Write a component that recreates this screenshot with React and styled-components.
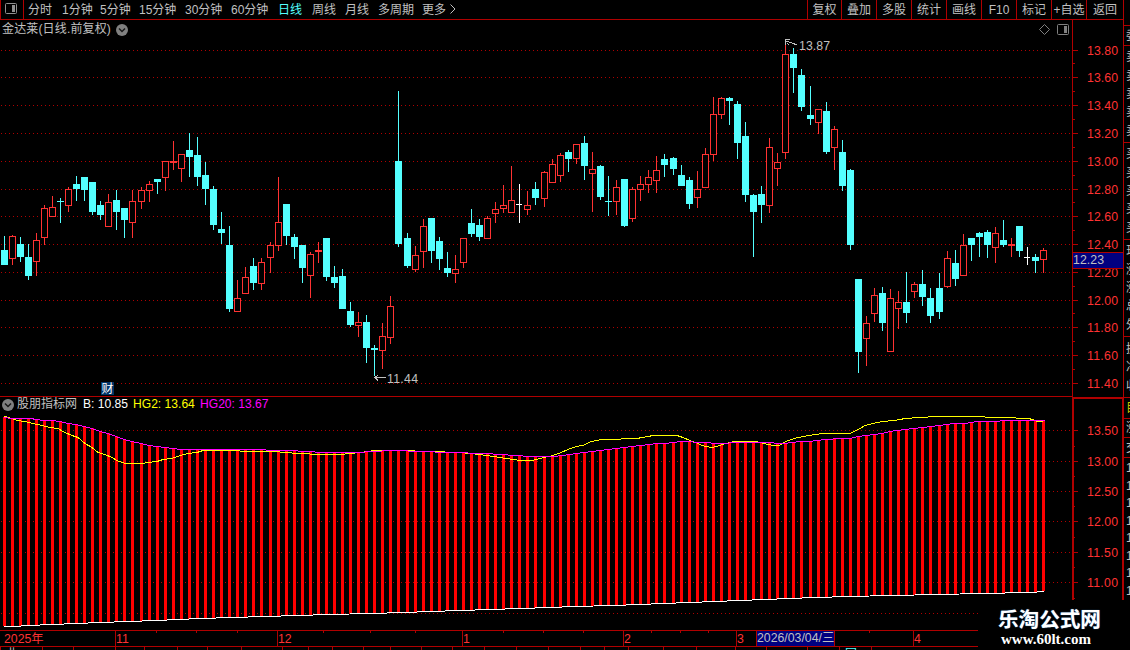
import React from "react";
import styled, { createGlobalStyle } from "styled-components";

const LINE = "#b00000";
const UP = "#ff3232";
const DOWN = "#54ffff";
const GREY = "#c0c0c0";
const FONT = '"Liberation Sans", "Noto Sans CJK SC", sans-serif';

const GlobalStyle = createGlobalStyle`
  * { box-sizing: border-box; }
  body { margin: 0; background: #000; overflow: hidden; font-family: ${FONT}; }
  svg { display: block; }
`;

const Screen = styled.div`
  position: relative;
  display: flex;
  width: 1130px;
  height: 650px;
  overflow: hidden;
  background: #000;
  color: ${GREY};
  font-size: 12px;
`;

const Main = styled.main`
  display: flex;
  flex-direction: column;
  width: 1123px;
  flex: none;
`;

const Toolbar = styled.header`
  display: flex;
  height: 20px;
  border-bottom: 1px solid ${LINE};
`;

const IconCell = styled.div`
  width: 24px;
  padding: 2px 0 0 3px;
  border: solid ${LINE};
  border-width: 0 1px;
`;

const Periods = styled.nav`
  display: flex;
  width: 783px;
  padding-left: 4px;
`;

const Period = styled.span`
  width: ${(p) => p.$w}px;
  line-height: 20px;
  white-space: nowrap;
  color: ${(p) => (p.$active ? DOWN : GREY)};
`;

const Action = styled.span`
  width: ${(p) => p.$w}px;
  line-height: 20px;
  text-align: center;
  white-space: nowrap;
  border-left: 1px solid ${LINE};
`;

const Panel = styled.section`
  display: flex;
  height: ${(p) => p.$h}px;
`;

const Plot = styled.div`
  display: flex;
  flex-direction: column;
  width: 1072px;
  border-bottom: ${(p) => (p.$ruled ? `1px solid ${LINE}` : "none")};
`;

const PanelHeader = styled.div`
  display: flex;
  align-items: center;
  height: ${(p) => p.$h}px;
  padding: 0 3px ${(p) => p.$lift || 0}px 2px;
  line-height: 15px;
  white-space: nowrap;
`;

const Title = styled.span`
  width: ${(p) => p.$w}px;
  padding-left: ${(p) => p.$indent || 0}px;
  letter-spacing: ${(p) => p.$spacing || 0}px;
  color: ${GREY};
`;

const Reading = styled.span`
  width: ${(p) => p.$w}px;
  font-size: 12.1px;
  color: ${(p) => p.$color};
`;

const HeaderTools = styled.div`
  display: flex;
  gap: 6px;
  align-items: center;
  margin-left: auto;
`;

const TimeAxis = styled.footer`
  position: relative;
  display: flex;
  width: 978px;
  height: 17px;
  border: solid ${LINE};
  border-width: 1px 0;
`;

const Month = styled.div`
  width: ${(p) => p.$w}px;
  padding-left: ${(p) => (p.$first ? 4 : 0)}px;
  border-left: ${(p) => (p.$first ? "none" : `1px solid ${LINE}`)};
  background: ${(p) => (p.$marked ? "#000080" : "transparent")};
  color: ${(p) => (p.$marked ? GREY : UP)};
  font-size: 12.3px;
  line-height: ${(p) => (p.$marked ? 15 : 16)}px;
  white-space: nowrap;
`;

const WeekTick = styled.i`
  position: absolute;
  top: 0;
  left: ${(p) => p.$x}px;
  width: 1px;
  height: 2px;
  background: ${LINE};
`;

const StatusStrip = styled.div`
  display: flex;
  width: 978px;
  height: 3px;
  overflow: hidden;
`;

const StatusCell = styled.div`
  flex: none;
  width: ${(p) => p.$w}px;
  height: 3px;
  border-left: 1px solid ${LINE};
  padding-left: 5px;
  line-height: 14px;
  color: ${(p) => p.$color || GREY};
  overflow: hidden;
  white-space: nowrap;
`;

const Quotes = styled.aside`
  display: flex;
  flex-direction: column;
  width: 7px;
  height: 600px;
  overflow: hidden;
  border-left: 1px solid ${LINE};
`;

const QuoteGroup = styled.div`
  display: flex;
  flex-direction: column;
  flex: none;
  justify-content: space-evenly;
  height: ${(p) => p.$h}px;
  padding-left: 2px;
  border-bottom: ${(p) => (p.$open ? "none" : `1px solid ${LINE}`)};
  color: ${(p) => p.$color || GREY};
  line-height: 14px;
  white-space: nowrap;
  overflow: hidden;
`;

const Watermark = styled.div`
  position: absolute;
  left: 978px;
  top: 600px;
  width: 152px;
  height: 50px;
  padding: 6px 0 0 20px;
  background: #000;
  color: #fff;
  white-space: nowrap;
`;

const SiteName = styled.div`
  font: bold 20.6px/25px "Noto Sans CJK SC", sans-serif;
  text-shadow: 0 0 1px #3d8ad8;
`;

const SiteUrl = styled.div`
  padding-left: 3px;
  font: bold 15px/16px "Liberation Serif", serif;
`;

const periods = [
  ["分时", 34], ["1分钟", 38], ["5分钟", 39], ["15分钟", 46], ["30分钟", 46], ["60分钟", 47],
  ["日线", 34], ["周线", 33], ["月线", 33], ["多周期", 44], ["更多", 27],
];
const actions = [
  ["复权", 34], ["叠加", 35], ["多股", 35], ["统计", 35], ["画线", 35],
  ["F10", 35], ["标记", 35], ["+自选", 35], ["返回", 37],
];

// high, body top, body bottom, low, kind (u = up, d = down, w = flat)
const candles = `236 250 265 265 d|235 236 259 265 u|237 244 257 262 d|244 257 276 280 d|233 240 262 276 u|205 208 238 245 u|196 207 217 217 u|198 201 202 223 d|187 189 206 212 u|176 184 189 201 d|177 177 190 201 d|182 182 212 215 d|201 205 215 220 d|194 202 227 227 u|190 200 212 230 d|208 208 220 238 d|190 201 223 238 u|187 190 202 209 u|181 184 191 202 u|179 179 182 194 d|161 161 178 191 u|141 161 163 170 u|154 154 169 182 u|133 150 157 177 d|137 155 177 186 d|162 175 189 205 d|186 189 225 230 d|212 229 233 244 d|226 245 309 312 d|280 298 312 312 u|267 277 294 294 u|258 266 283 290 d|258 262 284 290 u|242 245 258 273 u|177 222 246 251 u|204 204 236 245 d|234 237 247 259 d|245 245 268 283 d|252 254 276 298 u|242 250 252 263 u|238 238 277 281 d|266 277 283 288 d|269 276 309 309 d|302 311 325 327 d|312 322 326 337 u|315 322 348 363 d|345 348 350 376 d|323 336 351 369 u|296 306 338 344 u|91 161 244 247 d|233 238 266 268 d|246 255 270 272 u|219 226 252 268 u|218 218 251 263 d|237 241 259 270 d|252 268 273 277 d|255 269 274 283 u|238 238 263 268 u|209 223 234 237 d|219 225 237 241 d|216 218 239 239 u|202 209 214 223 u|185 205 209 213 u|166 200 213 213 u|184 204 205 223 w|191 205 210 215 u|182 189 198 205 d|171 172 199 207 u|159 164 183 183 u|153 155 176 182 u|150 152 159 172 d|144 144 159 164 u|136 143 166 180 d|152 169 174 212 u|165 166 197 200 d|176 201 202 216 d|180 187 202 215 u|179 179 226 227 d|187 189 219 222 u|176 184 190 201 u|170 177 185 193 u|156 170 181 193 u|154 159 165 177 d|157 158 169 175 d|165 175 186 186 d|177 180 204 209 d|171 189 198 208 u|148 154 188 188 u|97 114 155 161 u|97 98 115 119 u|97 98 101 125 d|101 104 143 159 d|122 136 195 202 d|194 195 212 257 d|186 194 205 223 d|138 147 206 213 u|153 162 169 186 u|43 54 153 159 u|48 54 68 93 d|69 75 107 111 d|86 115 119 125 d|109 109 123 134 u|102 111 152 154 d|126 129 148 170 u|140 152 186 191 d|169 170 245 250 d|279 279 352 373 d|316 323 339 366 u|288 295 314 322 u|287 293 323 331 d|289 298 352 352 u|291 302 309 329 u|272 302 313 323 d|282 284 292 298 u|270 284 297 306 d|288 298 316 323 d|273 288 312 319 d|251 258 287 288 u|250 263 279 286 d|234 245 276 276 u|238 238 245 261 d|232 233 237 257 d|230 232 245 258 d|227 233 248 263 u|220 240 245 247 d|238 244 246 257 u|226 226 251 257 d|247 257 258 265 w|254 257 261 273 d|248 250 260 273 u`
  .split("|")
  .map((row, i) => {
    const [hi, top, bottom, low, kind] = row.split(" ");
    return { x: 4 + 8 * i + Math.floor(i * 0.0602 + 0.02), hi: +hi, top: +top, bottom: +bottom, low: +low, kind };
  });

const slow = [[4,417],[12,418],[31,418],[36,419],[44,420],[52,420],[60,421],[68,423],[76,424],[84,426],[92,428],[100,431],[108,433],[116,436],[124,439],[132,441],[141,443],[149,445],[157,446],[165,447],[173,448],[181,449],[265,449],[267,450],[296,450],[300,451],[330,452],[360,452],[370,451],[395,450],[420,451],[450,452],[485,453],[500,454],[515,455],[530,456],[553,456],[563,455],[576,453],[584,452],[592,451],[600,450],[608,449],[616,448],[625,447],[632,446],[641,445],[649,444],[657,443],[665,443],[673,442],[681,441],[690,441],[696,442],[709,442],[713,443],[726,443],[732,442],[771,442],[777,443],[785,443],[792,442],[801,441],[809,441],[817,440],[826,439],[841,438],[850,438],[858,436],[866,435],[875,434],[882,433],[890,431],[897,430],[905,429],[914,428],[923,427],[931,426],[939,425],[947,424],[954,423],[965,423],[971,422],[978,421],[997,421],[1003,420],[1045,420]];
const fast = [[4,416],[9,417],[17,420],[25,421],[33,423],[42,425],[50,427],[58,428],[65,432],[72,435],[78,437],[85,443],[92,447],[98,452],[105,454],[112,457],[117,460],[125,463],[143,463],[147,462],[157,461],[163,459],[172,458],[180,455],[188,453],[197,452],[203,450],[276,451],[283,452],[300,453],[320,454],[340,454],[360,452],[375,450],[400,450],[430,451],[460,452],[480,454],[500,457],[520,460],[532,460],[540,458],[544,457],[553,455],[561,452],[568,449],[576,446],[583,445],[591,441],[602,439],[619,439],[623,438],[636,438],[643,437],[653,435],[677,435],[683,437],[690,440],[698,443],[702,445],[711,447],[717,446],[722,444],[734,441],[756,441],[764,443],[773,445],[779,445],[786,441],[794,438],[803,436],[822,433],[850,433],[860,428],[865,425],[873,423],[882,421],[895,420],[905,418],[920,417],[937,416],[982,416],[988,417],[1014,417],[1018,418],[1029,418],[1038,421],[1043,421]];
const base = [[4,626],[15,626],[28,625],[52,624],[76,623],[100,622],[128,621],[157,620],[177,619],[201,618],[232,617],[265,616],[297,615],[330,614],[370,613],[405,612],[430,611],[460,610],[490,609],[520,608],[550,607],[575,606],[613,605],[640,604],[663,603],[690,602],[715,601],[740,600],[765,599],[790,598],[815,597],[850,596],[890,595],[940,594],[980,593],[1030,592],[1044,591]];

const valueAt = (points, x) => {
  const next = points.findIndex((p) => p[0] >= x);
  if (next < 0) return points[points.length - 1][1];
  if (next === 0) return points[0][1];
  const [x0, y0] = points[next - 1];
  const [x1, y1] = points[next];
  return Math.round(y0 + ((y1 - y0) * (x - x0)) / (x1 - x0));
};

function Candle({ x, hi, top, bottom, low, kind }) {
  const color = kind === "u" ? UP : kind === "w" ? "#fff" : DOWN;
  const hollow = kind === "u" && bottom - top > 2;
  return (
    <g fill={color}>
      {hi < top && <rect x={x} y={hi} width="1" height={top - hi} />}
      {low > bottom && <rect x={x} y={bottom} width="1" height={low - bottom} />}
      {hollow ? (
        <>
          <rect x={x - 3} y={top} width="7" height={bottom - top} fill="#000" />
          <path d={`M${x - 2.5} ${top + 0.5}h6v${bottom - top - 1}h-6z`} fill="none" stroke={color} />
        </>
      ) : (
        <rect x={x - 3} y={top} width={kind === "w" ? 6 : 7} height={bottom - top} />
      )}
    </g>
  );
}

const Grid = ({ rows, end = 1072 }) =>
  rows.map((y) => (
    <line key={y} x1="1" x2={end} y1={y + 0.5} y2={y + 0.5} stroke={LINE} strokeDasharray="1 3" />
  ));

const Curve = ({ points, color }) => (
  <polyline points={points.map(([x, y]) => `${x},${y + 0.5}`).join(" ")} fill="none" stroke={color} />
);

const ChevronBadge = () => (
  <svg width="12" height="12" viewBox="0 0 12 12">
    <circle cx="6" cy="6" r="6" fill="#808080" />
    <path d="M3 4.5 6 7.5 9 4.5" fill="none" stroke="#181818" strokeWidth="1.5" />
  </svg>
);

const PaneIcon = ({ color = "#808080" }) => (
  <svg width="13" height="13" viewBox="0 0 13 13">
    <rect x="1.5" y="1.5" width="11" height="10" rx="1" fill="none" stroke={color} />
    <rect x="8" y="3" width="3" height="7" fill={color} />
  </svg>
);

const priceRows = [50, 77, 105, 133, 161, 189, 216, 244, 272, 300, 327, 355, 383];
const indexRows = [430, 461, 491, 521, 552, 582];

function PriceChart() {
  return (
    <svg width="1072" height="357" viewBox="0 39 1072 357" shapeRendering="crispEdges">
      <Grid rows={priceRows} />
      {candles.map((c) => <Candle key={c.x} {...c} />)}
      <g stroke={GREY} fill="none">
        <path d="M786 41l5 1.5 6 2.5M785.5 45v-5.5h4M787 43l2 2" />
        <path d="M374 377.5h12M378 375l-3 2.5 3 3" />
      </g>
      <g fill={GREY} fontSize="12.3" fontFamily={FONT}>
        <text x="799" y="50" textLength="31">13.87</text>
        <text x="387" y="383" textLength="31">11.44</text>
      </g>
      <rect x="101" y="382" width="13" height="13" fill="#003468" />
      <text x="101.5" y="393" fontSize="12" fill="#fff" fontFamily={FONT}>财</text>
    </svg>
  );
}

function IndexChart() {
  return (
    <svg width="1072" height="216" viewBox="0 414 1072 216" shapeRendering="crispEdges">
      <Grid rows={indexRows} />
      <Grid rows={[613]} end={978} />
      {candles.map(({ x }) => (
        <rect key={x} x={x - 1} y={valueAt(slow, x)} width="3" height={valueAt(base, x) - valueAt(slow, x)} fill="#f00" />
      ))}
      <Curve points={base} color="#fff" />
      <Curve points={fast} color="#ff0" />
      <Curve points={slow} color="#f0f" />
    </svg>
  );
}

function Axis({ top, height, rows, labels, minor, boxed, children }) {
  return (
    <svg width="51" height={height} viewBox={`1072 ${top} 51 ${height}`} shapeRendering="crispEdges">
      <g fill={LINE}>
        <rect x="1072" y={top} width={boxed ? 2 : 1} height={boxed ? 203 : height} />
        {boxed && <rect x="1072" y={top} width="51" height="2" />}
        {boxed && <rect x="1122" y={top} width="1" height="203" />}
        {rows.map((y) => <rect key={y} x="1072" y={y} width="6" height="1" />)}
        {minor.map((y) => <rect key={y} x="1072" y={y} width="3" height="1" />)}
      </g>
      <g fill={UP} fontFamily={FONT} fontSize="12.3">
        {rows.map((y, i) => <text key={y} x="1087" y={y + 5} textLength="31">{labels[i]}</text>)}
      </g>
      {children}
    </svg>
  );
}

const priceLabels = ["13.80","13.60","13.40","13.20","13.00","12.80","12.60","12.40","12.20","12.00","11.80","11.60","11.40"];
const indexLabels = ["13.50","13.00","12.50","12.00","11.50","11.00"];
const months = [["2025年",115],["11",162],["12",185],["1",161],["2",113],["3",20],["2026/03/04/三",78],["",79],["4",65]];
const weekTicks = [156,196,237,323,370,415,503,543,583,651,680,708,869];
const statusEdges = [0,42,73,115,144,177,207,241,282,308,332,363,390,421,452,484,516,548,580,604,628,663,696,735,766,807,839,871,978];
const quoteGroups = [
  { h: 26, rows: [] },
  { h: 20, rows: ["委"] },
  { h: 97, rows: ["卖", "卖", "卖", "卖", "卖"] },
  { h: 97, rows: ["买", "买", "买", "买", "买"] },
  { h: 97, rows: ["现", "涨", "涨", "总", "外"] },
  { h: 61, rows: ["换", "净", "收"] },
  { h: 21, rows: ["目"], color: "#c8c800" },
  { h: 19, rows: ["涨"] },
  { h: 20, rows: ["交"] },
  { h: 143, rows: ["1", "1", "1", "1", "1", "1", "1", "1"], open: true },
];

export default function App() {
  return (
    <Screen>
      <GlobalStyle />
      <Main>
        <Toolbar>
          <IconCell><PaneIcon color="#909090" /></IconCell>
          <Periods>
            {periods.map(([label, w]) => (
              <Period key={label} $w={w} $active={label === "日线"}>{label}</Period>
            ))}
            <svg width="8" height="18" viewBox="0 0 8 18">
              <path d="M1.5 4.500 6 9l-4.500 4.500" fill="none" stroke={GREY} />
            </svg>
          </Periods>
          {actions.map(([label, w]) => <Action key={label} $w={w}>{label}</Action>)}
        </Toolbar>
        <Panel $h={377}>
          <Plot $ruled>
            <PanelHeader $h={19}>
              <Title $w={114} $spacing={0.15}>金达莱(日线.前复权)</Title>
              <ChevronBadge />
              <HeaderTools>
                <svg width="11" height="11" viewBox="0 0 11 11">
                  <path d="M5.5 .5l5 5-5 5-5-5z" fill="none" stroke="#808080" />
                </svg>
                <PaneIcon />
              </HeaderTools>
            </PanelHeader>
            <PriceChart />
          </Plot>
          <Axis top={20} height={377} rows={priceRows} labels={priceLabels}
            minor={priceRows.slice(1).map((y) => y - 14)}>
            <rect x="1072.5" y="252.5" width="51" height="16" fill="#000080" stroke={LINE} />
            <text x="1073" y="264" fill={GREY} fontFamily={FONT} fontSize="12.3" textLength="31">12.23</text>
          </Axis>
        </Panel>
        <Panel $h={233}>
          <Plot>
            <PanelHeader $h={17} $lift={2}>
              <ChevronBadge />
              <Title $w={69} $indent={3}>股朋指标网</Title>
              <Reading $w={50} $color="#fff">B: 10.85</Reading>
              <Reading $w={67} $color="#ff0">HG2: 13.64</Reading>
              <Reading $w={72} $color="#f0f">HG20: 13.67</Reading>
            </PanelHeader>
            <IndexChart />
          </Plot>
          <Axis top={397} height={233} rows={indexRows} labels={indexLabels} boxed
            minor={[446, 476, 506, 537, 567, 598]} />
        </Panel>
        <TimeAxis>
          {months.map(([label, w], i) => (
            <Month key={i} $w={w} $first={i === 0} $marked={i === 6}>{label}</Month>
          ))}
          {weekTicks.map((x) => <WeekTick key={x} $x={x} />)}
        </TimeAxis>
        <StatusStrip>
          {statusEdges.slice(1).map((x, i) => (
            <StatusCell key={x} $w={x - statusEdges[i]} $color={i === 26 ? DOWN : GREY}>
              {i === 0 ? "业" : i === 26 ? "国" : ""}
            </StatusCell>
          ))}
        </StatusStrip>
      </Main>
      <Quotes>
        {quoteGroups.map(({ h, rows, color, open }, i) => (
          <QuoteGroup key={i} $h={h} $color={color} $open={open}>
            {rows.map((r, j) => <span key={j}>{r}</span>)}
          </QuoteGroup>
        ))}
      </Quotes>
      <Watermark>
        <SiteName>乐淘公式网</SiteName>
        <SiteUrl>www.60lt.com</SiteUrl>
      </Watermark>
    </Screen>
  );
}
